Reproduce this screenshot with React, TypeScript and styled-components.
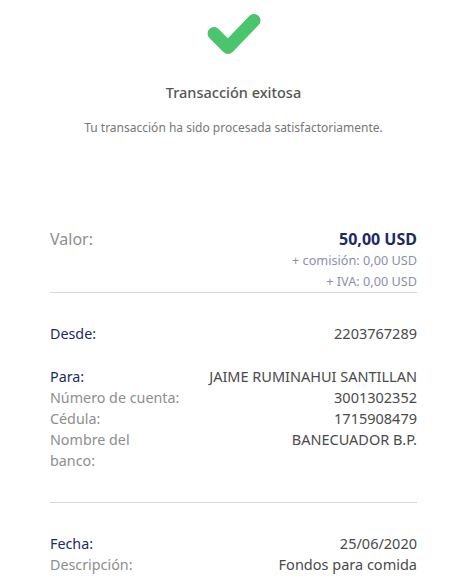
import React from "react";
import styled, { createGlobalStyle } from "styled-components";

const Global = createGlobalStyle`
  html, body { margin: 0; padding: 0; background: #fff; }
  body { font-family: "Noto Sans", "Liberation Sans", sans-serif; }
`;

const Page = styled.div`
  width: 456px;
  box-sizing: border-box;
  padding: 11px 39px 0 50px;
  display: flex;
  flex-direction: column;
`;

const Header = styled.div`
  display: flex;
  flex-direction: column;
  align-items: center;
`;

const Title = styled.div`
  margin-top: 25px;
  font-size: 14.5px;
  font-weight: 500;
  color: #555;
  line-height: 20px;
`;

const Subtitle = styled.div`
  margin-top: 18px;
  font-size: 12px;
  color: #777;
  line-height: 16px;
`;

const Section = styled.div<{ $top: number }>`
  margin-top: ${(p) => p.$top}px;
  display: flex;
  flex-direction: column;
`;

const Row = styled.div`
  display: flex;
  justify-content: space-between;
  align-items: flex-start;
  font-size: 14.5px;
  line-height: 21px;
`;

const Label = styled.div<{ $strong?: boolean; $big?: boolean; $nowrap?: boolean }>`
  color: ${(p) => (p.$strong ? "#1c2a64" : "#8e8e8e")};
  font-size: ${(p) => (p.$big ? "16px" : "14.3px")};
  max-width: ${(p) => (p.$big || p.$nowrap ? "none" : "110px")};
  white-space: ${(p) => (p.$nowrap ? "nowrap" : "normal")};
`;

const Value = styled.div`
  color: #4a4a4a;
  text-align: right;
`;

const Amount = styled.div`
  color: #1c2a64;
  font-weight: 700;
  font-size: 16px;
`;

const Fee = styled.div`
  color: #8b90b0;
  font-size: 12.7px;
  line-height: 21px;
  text-align: right;
`;

const Divider = styled.hr<{ $top: number }>`
  border: 0;
  border-top: 1px solid #d9d9d9;
  margin: ${(p) => p.$top}px 0 0 0;
  width: 100%;
`;

const Check = () => (
  <svg width="58" height="46" viewBox="0 0 58 46">
    <path
      d="M9 22.5 L23 36.5 L49 9.5"
      fill="none"
      stroke="#4bc46e"
      strokeWidth="13"
      strokeLinecap="round"
      strokeLinejoin="round"
    />
  </svg>
);

export default function App() {
  return (
    <>
      <Global />
      <Page>
        <Header>
          <Check />
          <Title>Transacción exitosa</Title>
          <Subtitle>Tu transacción ha sido procesada satisfactoriamente.</Subtitle>
        </Header>

        <Section $top={93}>
          <Row>
            <Label $big>Valor:</Label>
            <Amount>50,00 USD</Amount>
          </Row>
          <Fee>+ comisión: 0,00 USD</Fee>
          <Fee>+ IVA: 0,00 USD</Fee>
        </Section>
        <Divider $top={0} />

        <Section $top={30}>
          <Row>
            <Label $strong>Desde:</Label>
            <Value>2203767289</Value>
          </Row>
        </Section>

        <Section $top={22}>
          <Row>
            <Label $strong>Para:</Label>
            <Value>JAIME RUMINAHUI SANTILLAN</Value>
          </Row>
          <Row>
            <Label $nowrap>Número de cuenta:</Label>
            <Value>3001302352</Value>
          </Row>
          <Row>
            <Label>Cédula:</Label>
            <Value>1715908479</Value>
          </Row>
          <Row>
            <Label>Nombre del banco:</Label>
            <Value>BANECUADOR B.P.</Value>
          </Row>
        </Section>
        <Divider $top={31} />

        <Section $top={30}>
          <Row>
            <Label $strong>Fecha:</Label>
            <Value>25/06/2020</Value>
          </Row>
          <Row>
            <Label>Descripción:</Label>
            <Value>Fondos para comida</Value>
          </Row>
        </Section>
      </Page>
    </>
  );
}
